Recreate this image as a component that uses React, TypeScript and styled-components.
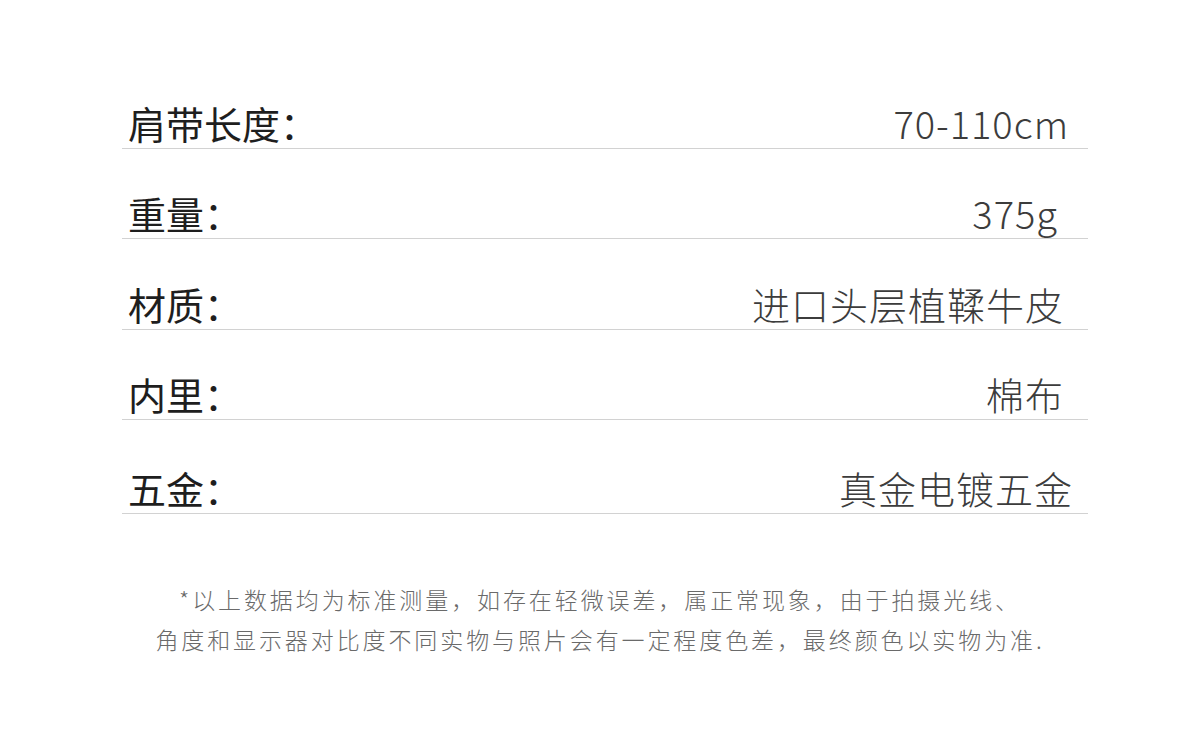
import React from "react";
import styled, { createGlobalStyle } from "styled-components";

const GlobalStyle = createGlobalStyle`
  html, body {
    margin: 0;
    padding: 0;
    background: #ffffff;
  }
  body {
    font-family: "Noto Sans CJK SC", "Noto Sans", sans-serif;
  }
`;

const Page = styled.div`
  width: 1200px;
  height: 744px;
  background: #ffffff;
  overflow: hidden;
  padding-top: 59px;
  box-sizing: border-box;
`;

const Table = styled.div`
  width: 966px;
  margin-left: 122px;
  display: flex;
  flex-direction: column;
`;

const Row = styled.div<{ height: number }>`
  height: ${({ height }) => height}px;
  display: flex;
  align-items: flex-end;
  justify-content: space-between;
  border-bottom: 1.5px solid #d2d2d2;
  box-sizing: border-box;
`;

const Label = styled.div`
  padding-left: 6px;
  line-height: 50px;
  font-size: 38px;
  font-weight: 400;
  color: #1e1e1e;
  white-space: nowrap;
`;

const Value = styled.div<{ inset: number }>`
  padding-right: ${({ inset }) => inset}px;
  line-height: 50px;
  font-size: 38px;
  font-weight: 200;
  letter-spacing: 1px;
  color: #3c3c3c;
  white-space: nowrap;
`;

const Note = styled.div`
  margin-top: 65px;
  display: flex;
  flex-direction: column;
  align-items: center;
`;

const NoteLine = styled.div`
  line-height: 40px;
  font-size: 23px;
  font-weight: 300;
  letter-spacing: 2.9px;
  color: #6a6a6a;
  white-space: nowrap;
`;

const SPECS = [
  { label: "肩带长度：", value: "70-110cm", inset: 19, height: 90 },
  { label: "重量：", value: "375g", inset: 30, height: 90 },
  { label: "材质：", value: "进口头层植鞣牛皮", inset: 24, height: 91 },
  { label: "内里：", value: "棉布", inset: 24, height: 90 },
  { label: "五金：", value: "真金电镀五金", inset: 15, height: 94 },
];

const App = () => {
  return (
    <>
      <GlobalStyle />
      <Page>
        <Table>
          {SPECS.map((spec) => (
            <Row height={spec.height} key={spec.label}>
              <Label>{spec.label}</Label>
              <Value inset={spec.inset}>{spec.value}</Value>
            </Row>
          ))}
        </Table>
        <Note>
          <NoteLine>*以上数据均为标准测量，如存在轻微误差，属正常现象，由于拍摄光线、</NoteLine>
          <NoteLine>角度和显示器对比度不同实物与照片会有一定程度色差，最终颜色以实物为准.</NoteLine>
        </Note>
      </Page>
    </>
  );
};

export default App;
